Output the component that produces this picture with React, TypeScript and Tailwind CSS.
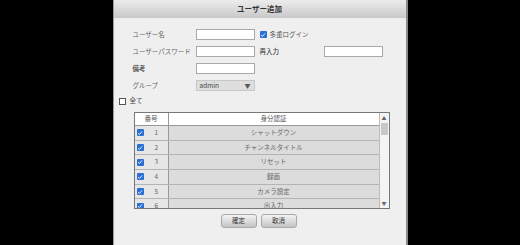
const rows = [
  { no: 1, name: "シャットダウン" },
  { no: 2, name: "チャンネルタイトル" },
  { no: 3, name: "リセット" },
  { no: 4, name: "録画" },
  { no: 5, name: "カメラ設定" },
  { no: 6, name: "出入力" },
]

function Check({ on }: { on?: boolean }) {
  if (!on) {
    return <span className="block h-[7px] w-[7px] border border-[#555] bg-white" />
  }
  return (
    <span className="flex h-[7px] w-[7px] items-center justify-center rounded-[1px] bg-[#2a6fd6]">
      <svg width="6" height="6" viewBox="0 0 6 6">
        <path d="M1 3.2 L2.4 4.5 L5 1.5" stroke="white" strokeWidth="0.9" fill="none" />
      </svg>
    </span>
  )
}

function Field() {
  return <div className="h-[11px] w-[59px] border border-[#a9a9a9] bg-white" />
}

export default function App() {
  return (
    <div
      className="flex h-[245px] w-[520px] justify-center overflow-hidden bg-black"
      style={{ fontFamily: '"Noto Sans CJK JP", "Noto Sans", sans-serif' }}
    >
      <div className="flex h-full w-[295px] flex-col border-l border-r-2 border-l-[#9a9a9a] border-r-[#8a8a8a] bg-[#efefef]">
        <div className="flex h-[18px] items-center justify-center bg-gradient-to-b from-[#ececec] to-[#c9c9c9] text-[7.5px] font-bold text-[#333]">
          ユーザー追加
        </div>

        <div className="flex flex-col pl-[19px] text-[6.5px] text-[#666]">
          <div className="mt-[11px] flex h-[11px] items-center">
            <span className="w-[63px]">ユーザー名</span>
            <Field />
            <span className="ml-[5px]"><Check on /></span>
            <span className="ml-[3px] text-[#555]">多重ログイン</span>
          </div>
          <div className="mt-[6px] flex h-[11px] items-center">
            <span className="w-[63px]">ユーザーパスワード</span>
            <Field />
            <span className="ml-[5px] w-[64px] font-medium text-[#444]">再入力</span>
            <Field />
          </div>
          <div className="mt-[6px] flex h-[11px] items-center">
            <span className="w-[63px] font-medium text-[#444]">備考</span>
            <Field />
          </div>
          <div className="mt-[6px] flex h-[11px] items-center">
            <span className="w-[63px]">グループ</span>
            <div className="flex h-[11px] w-[59px] items-center justify-between border border-[#c8c8c8] bg-[#dedede] px-[3px] text-[#444]">
              <span>admin</span>
              <span className="text-[6px] text-[#555]">▼</span>
            </div>
          </div>
          <div className="ml-[-14px] mt-[6px] flex h-[8px] items-center">
            <Check />
            <span className="ml-[4px] text-[#444]">全て</span>
          </div>
        </div>

        <div className="ml-[20px] mt-[7px] flex h-[97px] w-[256px] border border-[#777] bg-white text-[6.5px] text-[#666]">
          <div className="flex flex-1 flex-col overflow-hidden">
            <div className="flex h-[13px] shrink-0 border-b border-[#999] bg-white">
              <div className="flex w-[34px] items-center justify-center border-r border-[#999] text-[#555]">番号</div>
              <div className="flex flex-1 items-center justify-center text-[#555]">身分認証</div>
            </div>
            {rows.map((r) => (
              <div key={r.no} className="flex h-[14.7px] shrink-0 border-b border-[#b4b4b4] bg-[#dcdcdc]">
                <div className="flex w-[34px] items-center border-r border-[#999] bg-[#e6e6e6] pl-[2px]">
                  <Check on />
                  <span className="ml-[11px]">{r.no}</span>
                </div>
                <div className="flex flex-1 items-center justify-center">{r.name}</div>
              </div>
            ))}
          </div>
          <div className="flex w-[10px] flex-col border-l border-[#bbb] bg-[#f4f4f4]">
            <div className="flex h-[10px] items-center justify-center text-[5px] text-[#666]">▲</div>
            <div className="mx-auto h-[12px] w-[7px] bg-[#c8c8c8]" />
            <div className="flex-1" />
            <div className="flex h-[10px] items-center justify-center text-[5px] text-[#666]">▼</div>
          </div>
        </div>

        <div className="mt-[5px] flex justify-center gap-[4px] pr-[2px] text-[6.5px] text-[#333]">
          <div className="flex h-[14px] w-[36px] items-center justify-center rounded-[3px] border border-[#a8a8a8] bg-gradient-to-b from-[#f4f4f4] to-[#c4c4c4]">確定</div>
          <div className="flex h-[14px] w-[36px] items-center justify-center rounded-[3px] border border-[#a8a8a8] bg-gradient-to-b from-[#f4f4f4] to-[#c4c4c4]">取消</div>
        </div>
      </div>
    </div>
  )
}
